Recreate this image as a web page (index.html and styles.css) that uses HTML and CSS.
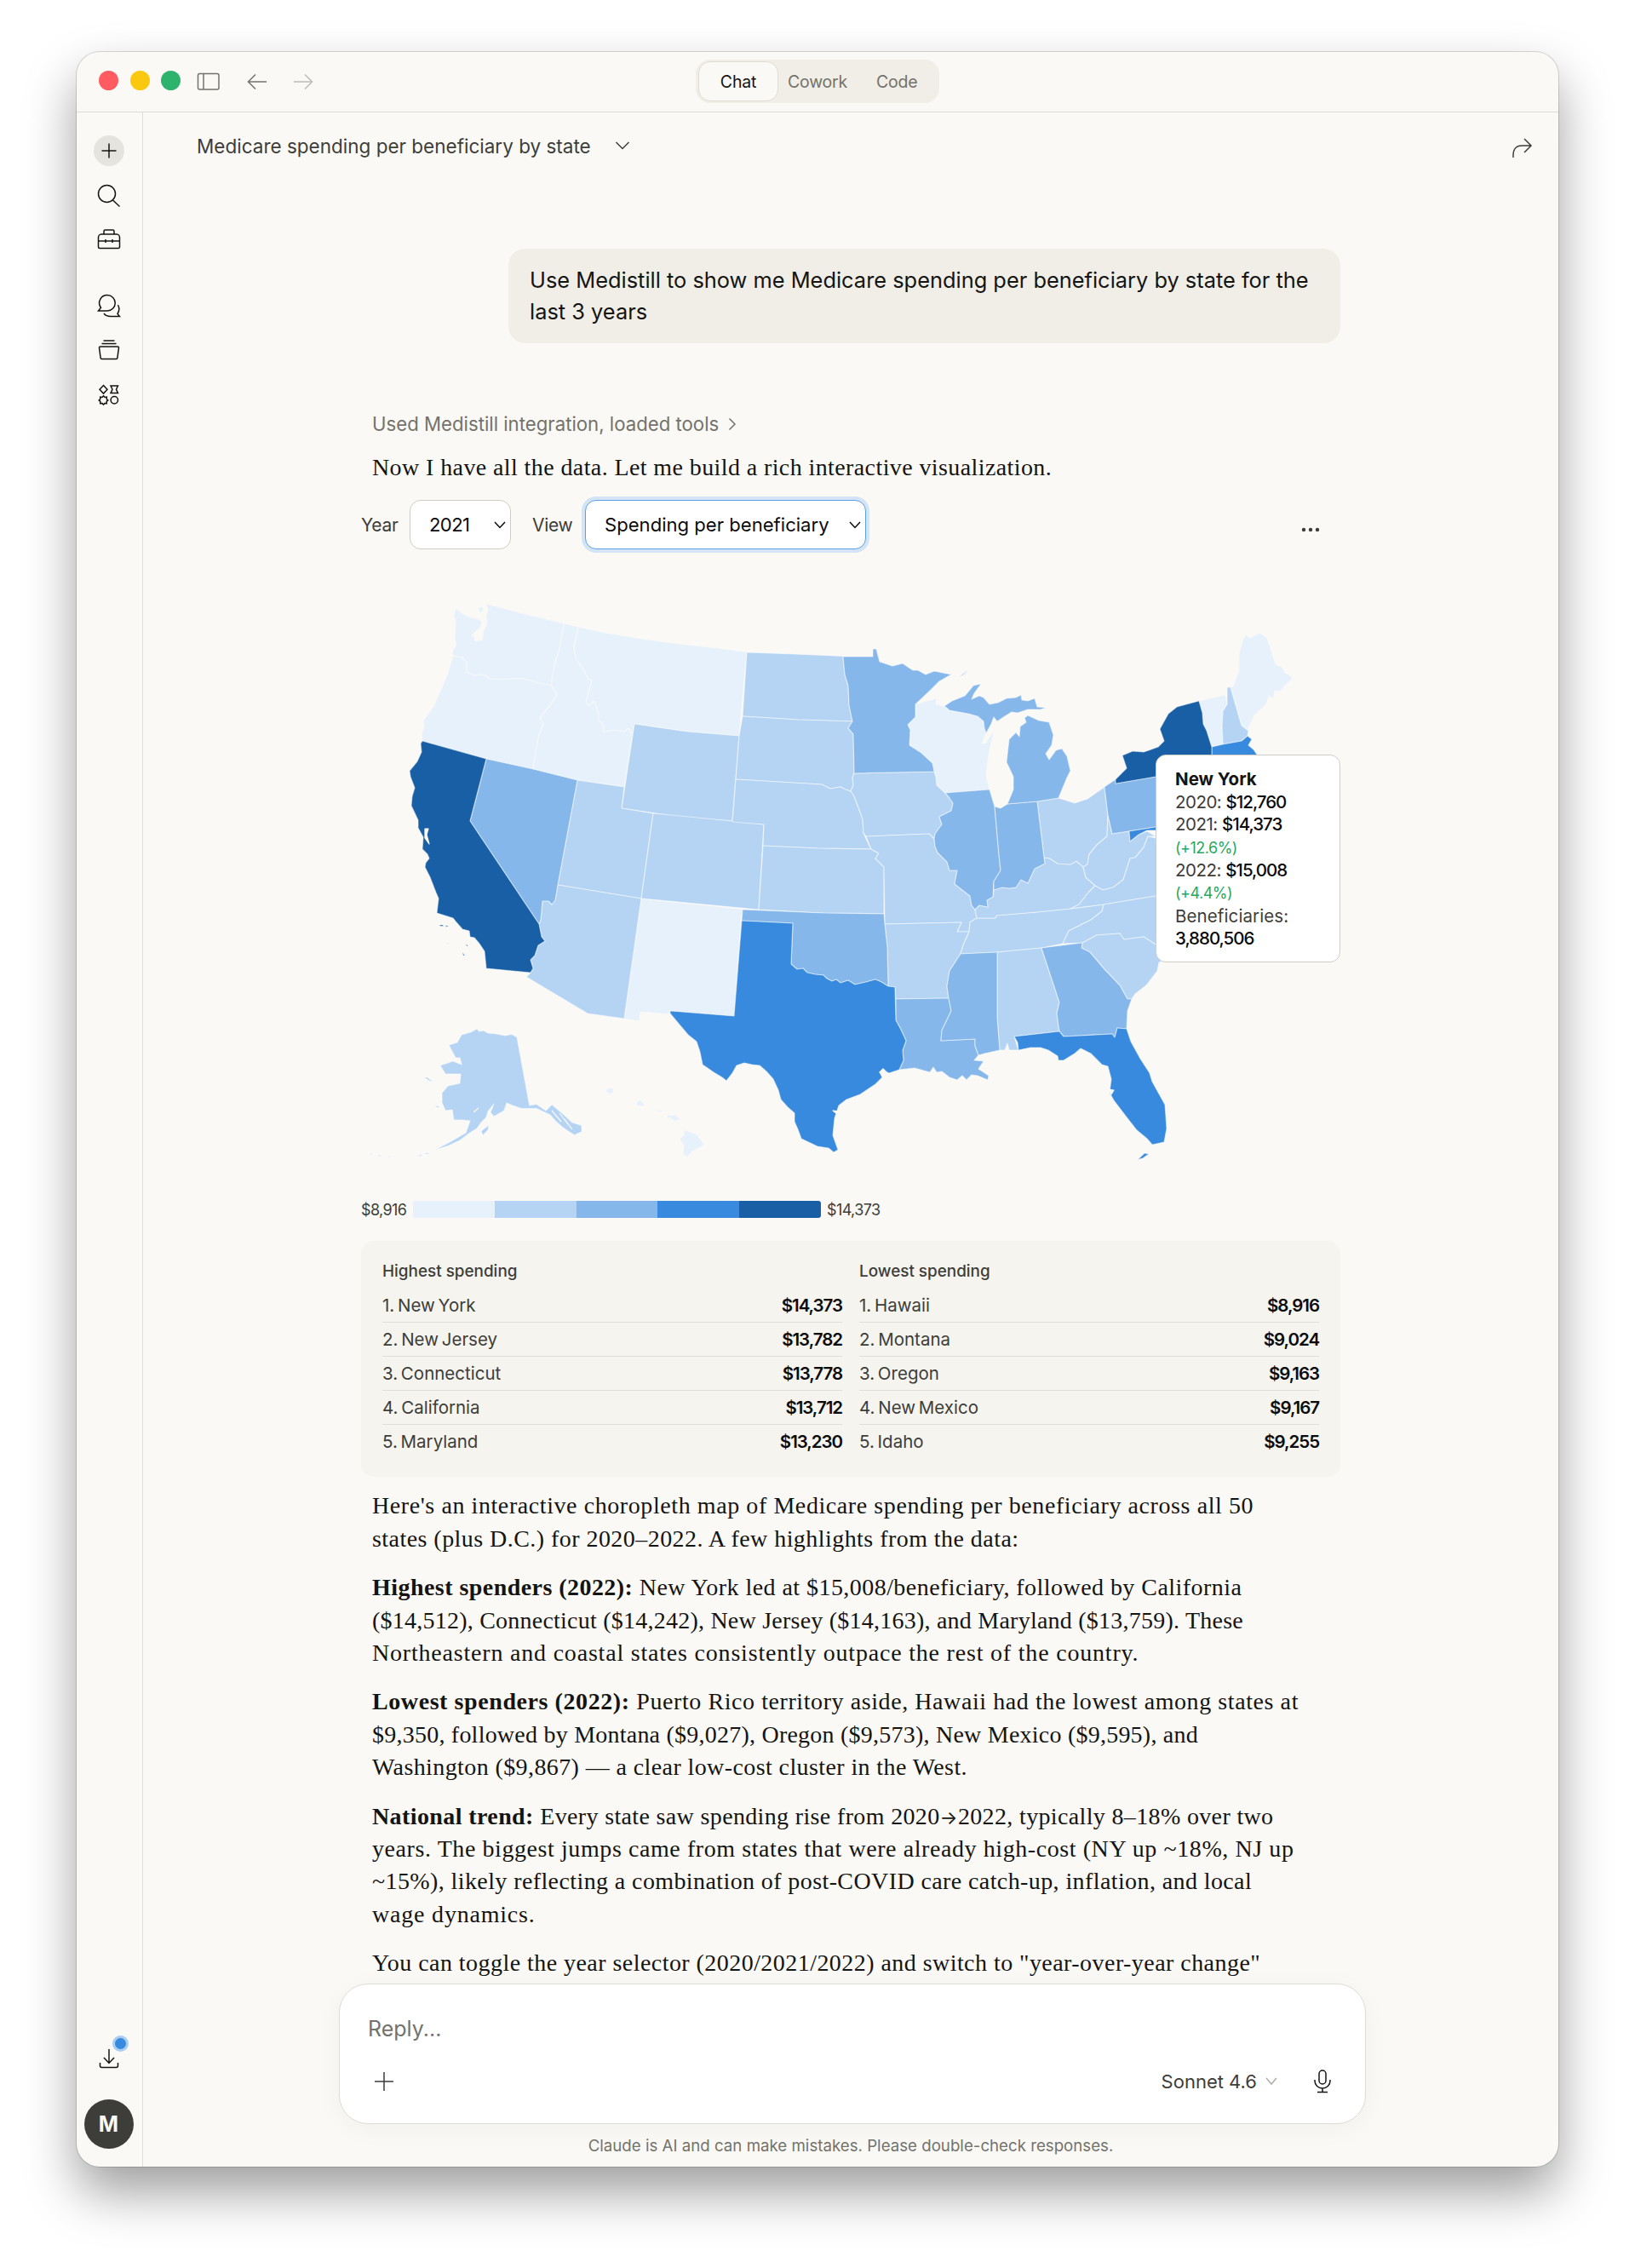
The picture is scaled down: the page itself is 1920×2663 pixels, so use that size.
FILE: index.html
```html
<!DOCTYPE html>
<html lang="en">
<head>
    <meta charset="UTF-8">
    <meta name="viewport" content="width=device-width, initial-scale=1.0">
    <title>Medicare spending per beneficiary by state</title>
    <link rel="stylesheet" href="styles.css">
</head>
<body>
    <div class="window">
        <header class="titlebar">
            <div class="titlebar-left">
                <span class="light light-red"></span>
                <span class="light light-yellow"></span>
                <span class="light light-green"></span>
                <svg class="icon-panel" width="28" height="24" viewBox="0 0 28 24"><rect x="1.5" y="2.5" width="24.5" height="18.5" rx="2"/><path d="M8 2.5v18.5"/></svg>
                <svg class="icon-back" width="24" height="20" viewBox="0 0 24 20"><path d="M23 10H1.5M10 1.5L1.5 10l8.500 8.500"/></svg>
                <svg class="icon-forward" width="24" height="20" viewBox="0 0 24 20"><path d="M1 10h21.500M14 1.500l8.500 8.500-8.500 8.500"/></svg>
            </div>
            <nav class="tabs">
                <span class="tab active">Chat</span>
                <span class="tab tab-cowork">Cowork</span>
                <span class="tab tab-code">Code</span>
            </nav>
        </header>

        <div class="body">
            <aside class="sidebar">
                <div class="sidebar-top">
                    <span class="new-chat"><svg width="20" height="20" viewBox="0 0 20 20"><path d="M10 1.500v17M1.500 10h17"/></svg></span>
                    <svg class="side-icon" width="28" height="28" viewBox="0 0 28 28"><circle cx="11.500" cy="11.500" r="10"/><path d="M18.500 19l8 7.500"/></svg>
                    <svg class="side-icon" width="28" height="28" viewBox="0 0 28 28"><path d="M8 7V3.500a1.500 1.500 0 0 1 1.500-1.500h9A1.500 1.500 0 0 1 20 3.500V7"/><path d="M5 7h18c2 0 3.500 2 3.500 4v11a1.500 1.500 0 0 1-1.500 1.500H3A1.500 1.500 0 0 1 1.500 22V11c0-2 1.500-4 3.500-4zM1.500 15h25M10 13v4M18 13v4"/></svg>
                    <svg class="side-icon side-gap" width="28" height="28" viewBox="0 0 28 28"><path d="M12 1.500a9.250 9.250 0 0 1 0 18.500H1.500l3-3.700A9.250 9.250 0 0 1 12 1.500z"/><path d="M8 23c2 2.800 5 3.500 8 3.500H26.500l-2.500-3c2-3 2.500-7 .5-10.500"/></svg>
                    <svg class="side-icon" width="28" height="28" viewBox="0 0 28 28"><path d="M7.500 3h13M5.500 6.500h17M3.500 10h21a1 1 0 0 1 1 1.200l-1.600 12a1.500 1.500 0 0 1-1.500 1.300H5.600a1.500 1.500 0 0 1-1.500-1.300l-1.600-12a1 1 0 0 1 1-1.200z"/></svg>
                    <svg class="side-icon" width="28" height="28" viewBox="0 0 28 28"><path d="M7.500 3.500l4.500 4.800-4.500 4.800L3 8.300zM16 4h8.500l-2 4.300 2 4.300H16l2-4.300z"/><circle cx="20.300" cy="20.800" r="4.200"/><path d="M7.500 15.800l1.500 1.600 2.300-.3-.1 2.300 1.600 1.500-1.600 1.500.1 2.300-2.300-.2-1.500 1.600-1.500-1.600-2.300.2.1-2.300-1.600-1.500 1.600-1.500-.1-2.300 2.300.3z"/></svg>
                </div>
                <div class="sidebar-bottom">
                    <div class="download">
                        <svg class="side-icon" width="28" height="28" viewBox="0 0 28 28"><path d="M14 3v16M8 13l6 6.500 6-6.500M3.500 19v3.500A2 2 0 0 0 5.500 24.500h17a2 2 0 0 0 2-2V19"/></svg>
                        <span class="dot"></span>
                    </div>
                    <span class="avatar">M</span>
                </div>
            </aside>

            <main class="main">
                <div class="chat-header">
                    <h1 class="chat-title">Medicare spending per beneficiary by state</h1>
                    <svg class="chevron" width="18" height="12" viewBox="0 0 18 12"><path d="M1.500 2L9 9.500 16.500 2"/></svg>
                    <svg class="share" width="25" height="26" viewBox="0 0 25 26"><path d="M2 25v-3c0-6.500 3.500-11 10-11h11M15 3l8 8-8 8"/></svg>
                </div>

                <div class="thread">
                    <div class="bubble">Use Medistill to show me Medicare spending per beneficiary by state for the<br>last 3 years</div>

                    <div class="tool-note">Used Medistill integration, loaded tools
                        <svg width="10" height="16" viewBox="0 0 10 16"><path d="M1.500 1.500L8 8l-6.500 6.500"/></svg>
                    </div>
                    <p class="intro">Now I have all the data. Let me build a rich interactive visualization.</p>

                    <section class="widget">
                        <div class="controls">
                            <label>Year</label>
                            <div class="select select-year"><span>2021</span><svg width="16" height="11" viewBox="0 0 16 11"><path d="M2 2l6 6.500L14 2"/></svg></div>
                            <label class="label-view">View</label>
                            <div class="select select-view"><span>Spending per beneficiary</span><svg width="16" height="11" viewBox="0 0 16 11"><path d="M2 2l6 6.500L14 2"/></svg></div>
                            <svg class="more" width="22" height="6" viewBox="0 0 22 6"><circle cx="3" cy="3" r="2.200"/><circle cx="11" cy="3" r="2.200"/><circle cx="19" cy="3" r="2.200"/></svg>
                        </div>

                        <div class="map-wrap">
                            <svg class="map" width="1150" height="700" viewBox="424 690 1150 700">
                                <!-- lowest band -->
                                <g class="q1">
                                    <path id="WA" d="M535 714L544 721 553 725 562 727 566 731 564 737 558 742 554 746 557 747.500 558 752.500 566 752 568 740 572 733 571 723 573 715 570 708.700Q615 721 662 732L657 762 652 778 648 797V805L633 802 615 797H602L590 798 575 797 570 793 563 792 557 793 548 789V777L542 772 532 770 531 765 536 757 534 750 535 730 533 722zM561 714l5-2 2 4-4 4z"/>
                                    <path id="OR" d="M532 770L542 772 548 777V789L557 793 563 792 570 793 575 797 590 798 602 797H615L633 802 648 805 654 816 647 827 634 843 638 850 633 863 629 883 626 903Q598 897 571 891L496 870 495 862 498 853 497 846 509 830 520 805 526 790z"/>
                                    <path id="ID" d="M662 732L679 736 677 747 674 760 677 775 685 786 691 797 695 799 691 814 688 824 691 828 698 823 703 837V846L708 850 709 859 722 857 733 859 738 855 743 862 733 924 678 916 626 903 629 883 633 863 638 850 634 843 647 827 654 816 648 805V797L652 778 657 762z"/>
                                    <path id="MT" d="M679 736L710 743 753 750 797 756 843 761 877 765.500 868 864 807 859 745 850 743 862 738 855 733 859 722 857 709 859 708 850 703 846V837L698 823 691 828 688 824 691 814 695 799 691 797 685 786 677 775 674 760 677 747z"/>
                                    <path id="NM" d="M753 1055L872 1067.500 870 1081 862 1193 787 1187 785 1191 752 1188 751 1199 733 1196z"/>
                                    <path id="WI" d="M1075 827L1088 823 1100 820 1099 827 1109 829 1115 834 1137 838 1148 841 1155 847 1156 855 1158 861 1153 873H1157L1168 857 1162 880 1160 894 1158 910 1162 927 1110 931 1100 922 1099 912 1097 906 1095 896 1082 884 1068 875 1069 857 1066 851 1075 842z"/>
                                    <path id="VT" d="M1408 823L1439 816 1441 827 1436 835 1435 853 1436 874 1423 877 1417 858 1413 850 1412 837z"/>
                                    <path id="ME" d="M1445 807L1448 806 1455 787V767L1459 752 1463 745 1468 749 1479 743 1488 749 1498 780 1505 783 1510 791H1513L1518 797 1510 804 1503 812 1497 811 1495 820 1490 817 1487 827 1473 840 1467 853 1466 858 1458 852z"/>
                                    <path id="HI" d="M711 1281L715 1277.500 721 1277.700 720 1283 716 1285zM699 1287L702 1283 700 1286zM747 1295L752 1291 758 1299 748 1298zM769 1303L781 1304 775 1306zM775 1310L779 1311 778 1313.500zM783 1308L788 1310 793 1309 799 1314 792 1317 788 1313 784 1312.700zM803 1326L818 1332 827 1344 813 1352 807 1359 802 1355 803 1345 798 1338 803 1332z"/>
                                </g>
                                <!-- second band -->
                                <g class="q2">
                                    <path id="WY" d="M745 850L807 859 868 864 860 964 797 959 730 949z"/>
                                    <path id="UT" d="M678 916L733 924 730 949 767 955 753 1055 655 1039z"/>
                                    <path id="CO" d="M767 955L860 964 897 968 891 1068 753 1055z"/>
                                    <path id="AZ" d="M655 1039L753 1055 733 1196 690 1190 618 1147 623 1142 626 1137 623 1127 628 1122 632 1110 640 1105 636 1100 633 1085 635 1080 637 1058H644L648 1062 652 1057z"/>
                                    <path id="ND" d="M877 766L933 768 990 770.500 992 792 996 805 997 828 1001 847 937 845 872 841z"/>
                                    <path id="SD" d="M872 841L937 845 1001 847 996 855 1002 862 1003 908 1001 913 1002 922 999 929 993 927 987 924 975 926 965 921 864 915 868 864z"/>
                                    <path id="NE" d="M864 915L965 921 975 926 987 924 993 927 999 929 1003 935 1008 948 1013 962 1014 978 1018 987 1023 997 960 996 896 993 897 968 860 965z"/>
                                    <path id="KS" d="M896 993L960 996 1023 997 1032 1002 1028 1008 1038 1018V1073L967 1072 891 1068z"/>
                                    <path id="IA" d="M1003 908L1097 906 1099 912 1100 922 1110 931 1115 937 1119 943 1117 952 1103 959 1106 968 1098 979 1097 985 1091 979 1017 982 1014 978 1013 962 1008 948 1003 935 999 929 1002 922 1001 913z"/>
                                    <path id="MO" d="M1017 982L1091 979 1097 985 1098 994 1101 1001 1112 1012 1115 1022H1124L1121 1038 1139 1052 1141 1063 1145 1068 1147 1078 1139 1083 1138 1094H1124L1129 1083 1039 1085 1038 1018 1028 1008 1032 1002 1023 997z"/>
                                    <path id="AR" d="M1039 1085L1129 1083 1124 1094H1138L1131 1110 1128 1120 1115 1140 1112 1158 1114 1172 1052 1173 1051 1159 1043 1158 1042 1112z"/>
                                    <path id="TN" d="M1138 1094L1139 1083 1147 1078 1169 1078 1170 1075 1217 1071 1257 1067 1296 1062 1294 1070 1281 1080 1255 1093 1248 1108 1223 1113 1171 1118 1128 1120 1131 1110z"/>
                                    <path id="KY" d="M1145 1068L1150 1063 1160 1065 1159 1057 1166 1053 1167 1045 1177 1042 1185 1043 1193 1042 1199 1033 1207 1037 1215 1020 1227 1014 1226 1007 1233 1008 1242 1014 1257 1015 1264 1011 1272 1018 1275 1030 1286 1040 1278 1048 1267 1062 1257 1067 1217 1071 1170 1075 1169 1078 1147 1078z"/>
                                    <path id="OH" d="M1218 941L1243 937 1262 943 1277 938 1297 924 1301 957 1300 982 1288 992 1279 1003 1277 1015 1272 1018 1264 1011 1257 1015 1242 1014 1233 1008 1226 1007z"/>
                                    <path id="WV" d="M1301 957L1306 979 1326 976 1327 988 1337 980 1347 976 1357 982 1348 982 1343 995 1333 1007 1327 1008 1319 1033 1307 1042 1295 1045 1286 1040 1275 1030 1272 1018 1277 1015 1279 1003 1288 992 1300 982z"/>
                                    <path id="VA" d="M1257 1067L1267 1062 1278 1048 1286 1040 1295 1045 1307 1042 1319 1033 1327 1008 1333 1007 1343 995 1348 982 1357 984 1400 1000 1420 1040 1357 1052 1296 1062z"/>
                                    <path id="NC" d="M1296 1062L1357 1052 1420 1042 1430 1080 1382 1122 1357 1109 1343 1100 1320 1103 1315 1096 1288 1098 1271 1107 1248 1108 1255 1093 1281 1080 1294 1070z"/>
                                    <path id="SC" d="M1271 1107L1288 1098 1315 1096 1320 1103 1343 1100 1357 1109 1380 1122 1361 1130 1359 1140 1346 1157 1333 1167 1329 1173H1324L1315 1157 1296 1137 1280 1118 1270 1113z"/>
                                    <path id="AL" d="M1171 1118L1223 1113 1244 1177 1241 1190 1244 1211 1191 1217 1196 1233H1185L1183 1225 1180 1233H1174L1171 1195z"/>
                                    <path id="NH" d="M1441 807H1445L1458 852 1466 858 1465 864 1458 870 1436 874 1435 853 1436 835 1441 827z"/>
                                    <path id="DE" d="M1385 960L1400 985 1390 990z"/>
                                    <path id="AK" d="M560 1208L563 1211 568 1210 573 1213 583 1214 593 1216 601 1214.500 607 1217.700 621.700 1298 630 1296.500 641 1304 648 1297 660 1307 672 1318 683 1321.500V1329L678 1331 675 1333 667 1328 660 1323 652 1316 646 1309 630 1301.500 612 1301.500 602 1298 595 1295 592 1304 580 1311 576 1306 580 1296 573 1305 571 1312 565 1318 560 1325 552 1330 540 1339 527 1345 518 1348 511 1350 530 1340 547 1330 552 1316 543 1315 533 1315 531 1303 523 1304 519 1295V1283L526 1275 540 1272 541 1261H523L517 1251 532 1246 542 1250 540 1242H535L527 1227 537 1224 542 1215 553 1212z"/>
                                    <path d="M565 1328L574 1321 573 1327 567 1333zM498 1265L502 1265 508.500 1270.500 504 1269zM510 1298L516 1299 514 1301zM489 1358l6-2.500 1 1.500zM498 1355l5-2 0 2zM456 1357l4 1.500-3 0zM443 1356l5 1-3 1zM434 1354l3 1-2 1z"/>
                                </g>
                                <!-- third band -->
                                <g class="q3">
                                    <path id="NV" d="M571 891L626 903 678 916 655 1039 652 1057 648 1062 644 1058H637L635 1080 633 1085 552 964z"/>
                                    <path id="OK" d="M872 1068L967 1072 1038 1073 1039 1085 1042 1112 1043 1158 1035 1153 1028 1150 1017 1153 1004 1156 996 1151 987 1154 982 1150 977 1152 971 1149 967 1145 957 1144 948 1142 943 1137 936 1138 929 1132 931 1084 871 1081z"/>
                                    <path id="MN" d="M990 771H1025V762H1029L1033 777 1048 782 1060 779 1072 787H1078L1087 792 1097 788 1117 792 1103 800 1093 810 1075 827V842L1066 851 1069 857 1068 875 1082 884 1095 896 1097 906 1003 908 1002 862 996 855 1001 847 997 828 996 805 992 792z"/>
                                    <path id="IL" d="M1110 931L1162 927 1168 947 1173 1003 1175 1022 1167 1035 1166 1053 1159 1057 1160 1065 1150 1063 1145 1068 1141 1063 1139 1052 1121 1038 1124 1022H1115L1112 1012 1101 1001 1098 994 1097 985 1098 979 1106 968 1103 959 1117 952 1119 943 1115 937z"/>
                                    <path id="IN" d="M1168 947L1175 949 1183 944 1218 941 1226 1007 1227 1014 1215 1020 1207 1037 1199 1033 1193 1042 1185 1043 1177 1042 1167 1045V1035L1175 1022 1173 1003z"/>
                                    <path id="MI" d="M1109 829L1118 823 1133 817 1143 805 1152 803 1144 814 1141 821 1150 817 1155 819 1162 827 1172 825 1182 820 1193 819 1199 816 1200 822 1207 823 1215 820 1218 830 1228 831 1222 833 1207 833 1195 837 1188 836 1180 841 1171 847 1167 842 1164 850 1158 861 1156 855 1155 847 1148 841 1137 838 1115 834zM1207 840L1220 846 1232 848 1237 863 1235 875 1228 885 1232 892 1240 881 1247 879 1253 888 1257 905 1253 913 1248 925 1243 937 1218 941 1183 944 1190 927V912L1182 895 1185 868 1193 860 1197 865 1198 853 1205 848 1203 843zM1126 795L1137 786.500 1132 792z"/>
                                    <path id="LA" d="M1052 1173L1114 1172 1117 1187 1106 1210 1105 1222 1145 1220V1228L1149 1239 1144 1245 1155 1246 1149 1255 1161 1263 1160 1268 1148 1263 1141 1262 1135 1268 1130 1263 1124 1268 1115 1265 1106 1258 1100 1259 1096 1253 1092 1259 1074 1254 1056 1256 1061 1245 1060 1233 1064 1222 1057 1207 1052 1198z"/>
                                    <path id="MS" d="M1128 1120L1171 1118V1195L1174 1233 1156 1237 1149 1239 1145 1228V1220L1105 1222 1106 1210 1117 1187 1114 1172 1112 1158 1115 1140z"/>
                                    <path id="GA" d="M1223 1113L1271 1107 1270 1113 1280 1118 1296 1137 1315 1157 1324 1173H1329L1324 1187 1323 1208 1312 1207 1309 1218 1306 1214 1249 1217 1244 1211 1241 1190 1244 1177z"/>
                                    <path id="PA" d="M1297 924L1310 915V920L1357 912 1400 905V965L1357 971 1306 979 1301 957z"/>
                                </g>
                                <!-- fourth band -->
                                <g class="q4">
                                    <path id="TX" d="M871 1081L931 1084 929 1132 936 1138 943 1137 948 1142 957 1144 967 1145 971 1149 977 1152 982 1150 987 1154 996 1151 1004 1156 1017 1153 1028 1150 1035 1153 1043 1158 1051 1159 1052 1198 1057 1207 1064 1222 1060 1233 1061 1245 1056 1256 1044 1260 1038 1257 1033 1259 1036 1265 1028 1273 1010 1285 994 1291 985 1298 980 1313 978 1333 984 1350 979 1353 973 1348 960 1346 941 1337 937 1326 933 1317V1307L925 1300 917 1291 914 1280 908 1267 900 1258 892 1251 883 1250 874 1248 865 1251 860 1260 853 1269 848 1265 838 1259 825 1250 822 1235 818 1223 808 1215 797 1202 787 1190V1187L862 1193z"/>
                                    <path id="FL" d="M1191 1217L1244 1211 1249 1217 1306 1214 1309 1218 1312 1207 1323 1208 1328 1223 1339 1243 1350 1260 1353 1270 1368 1297 1370 1325 1367 1341 1353 1344 1347 1337 1335 1327 1324 1313 1308 1292 1303 1283 1305 1267 1301 1252 1294 1250 1281 1237 1269 1231 1262 1237 1249 1245H1243L1242 1240 1231 1233 1222 1230H1210L1196 1233 1195 1224zM1336 1361.500L1344 1354 1349 1355 1342 1360z"/>
                                    <path id="MD" d="M1326 976L1357 971 1390 965V985L1357 975H1347L1337 980 1327 988z"/>
                                    <path id="MA" d="M1423 877L1436 874 1458 870 1465 864 1470 868 1466 875 1472 880 1476 886 1490 900H1423z"/>
                                </g>
                                <!-- top band -->
                                <g class="q5">
                                    <path id="CA" d="M496 870L571 891 552 964 633 1085 636 1100 640 1105 632 1110 628 1122 623 1127 626 1137 623 1142 571 1137 569 1117 563 1108 557 1101 552 1100 551 1093 543 1091 536 1083 532 1078 513 1072 515 1055 512 1048 505 1030 499 1018 500 1013 504 1008 502 1003 496 997 497 983 491 972V963L483 946 484 935 487 925 482 912 481 905 490 894 495 883 494 873z"/>
                                    <path d="M516 1086h4l1 1.500h-4zM523 1086.500l4 1-3 1zM547 1108l3 3-2 0zM543 1118l3 4h-2zM525 1107l2 1-1 0z"/>
                                    <path id="NY" d="M1310 915L1323 902 1318 887 1330 882 1343 883 1349 881 1360 877 1367 870 1362 856 1372 838 1382 830 1408 823 1412 837 1413 850 1417 858 1423 877V895L1400 905 1357 912 1310 920z"/>
                                </g>
                                <path class="water" d="M499 973h4l-2 7 3 11-5-7zM1033 1259l4-4 3 3-3 4zM978 1304l8 1-3 3zM562 1301l-6 5M657 1307l10 13M648 1304l11 13M663 1314l9 12M1302 1279l6 1-3 5z"/>
                            </svg>

                            <div class="tooltip">
                                <b>New York</b><br>
                                2020: <em>$12,760</em><br>
                                2021: <em>$14,373</em><br>
                                <span class="up">(+12.6%)</span><br>
                                2022: <em>$15,008</em><br>
                                <span class="up">(+4.4%)</span><br>
                                <span class="wide">Beneficiaries:</span><br>
                                <em>3,880,506</em>
                            </div>
                        </div>

                        <div class="legend">
                            <span>$8,916</span>
                            <div class="legend-bar"><i class="b1"></i><i class="b2"></i><i class="b3"></i><i class="b4"></i><i class="b5"></i></div>
                            <span>$14,373</span>
                        </div>

                        <div class="ranks">
                            <div class="rank">
                                <h2>Highest spending</h2>
                                <div class="row"><span>1. New York</span><strong>$14,373</strong></div>
                                <div class="row"><span>2. New Jersey</span><strong>$13,782</strong></div>
                                <div class="row"><span>3. Connecticut</span><strong>$13,778</strong></div>
                                <div class="row"><span>4. California</span><strong>$13,712</strong></div>
                                <div class="row"><span>5. Maryland</span><strong>$13,230</strong></div>
                            </div>
                            <div class="rank">
                                <h2>Lowest spending</h2>
                                <div class="row"><span>1. Hawaii</span><strong>$8,916</strong></div>
                                <div class="row"><span>2. Montana</span><strong>$9,024</strong></div>
                                <div class="row"><span>3. Oregon</span><strong>$9,163</strong></div>
                                <div class="row"><span>4. New Mexico</span><strong>$9,167</strong></div>
                                <div class="row"><span>5. Idaho</span><strong>$9,255</strong></div>
                            </div>
                        </div>
                    </section>

                    <article class="answer">
                        <p><span class="base">Here's an interactive choropleth map of Medicare spending per beneficiary across all 50</span><br>states (plus D.C.) for 2020–2022. A few highlights from the data:</p>
                        <p><b>Highest spenders (2022):</b> New York led at $15,008/beneficiary, followed by California<br><span class="snug">($14,512), Connecticut ($14,242), New Jersey ($14,163), and Maryland ($13,759). These</span><br><span class="wide">Northeastern and coastal states consistently outpace the rest of the country.</span></p>
                        <p class="base"><b>Lowest spenders (2022):</b> Puerto Rico territory aside, Hawaii had the lowest among states at<br><span class="snug">$9,350, followed by Montana ($9,027), Oregon ($9,573), New Mexico ($9,595), and</span><br><span class="regular">Washington ($9,867) — a clear low-cost cluster in the West.</span></p>
                        <p class="regular"><b>National trend:</b> <span class="loose">Every state saw spending rise from 2020<span class="arrow">→</span>2022, typically 8–18% over two</span><br><span class="base">years. The biggest jumps came from states that were already high-cost (NY up ~18%, NJ up</span><br>~15%), likely reflecting a combination of post-COVID care catch-up, inflation, and local<br><span class="wide">wage dynamics.</span></p>
                        <p>You can toggle the year selector (2020/2021/2022) and switch to "year-over-year change"</p>
                    </article>
                </div>

                <div class="composer">
                    <div class="placeholder">Reply...</div>
                    <div class="composer-row">
                        <svg class="plus" width="24" height="24" viewBox="0 0 24 24"><path d="M12 1v22M1 12h22"/></svg>
                        <span class="model">Sonnet 4.6</span>
                        <svg class="model-chevron" width="14" height="10" viewBox="0 0 14 10"><path d="M1 1l6 7 6-7"/></svg>
                        <svg class="mic" width="22" height="30" viewBox="0 0 22 30"><rect x="7" y="2" width="8" height="16" rx="4"/><path d="M2 13v1.500a9 8.500 0 0 0 18 0V13M11 23v4.500M5 27.500h12"/></svg>
                    </div>
                </div>
                <p class="disclaimer">Claude is AI and can make mistakes. Please double-check responses.</p>
            </main>
        </div>
    </div>
</body>
</html>
```

FILE: styles.css
```css
* {
    box-sizing: border-box;
}
body {
    margin: 0;
    padding: 61px 90px 0;
    height: 2663px;
    overflow: hidden;
    background: #ffffff;
    font-family: Inter, "Liberation Sans", sans-serif;
    color: #141413;
}
svg {
    fill: none;
    stroke: currentColor;
    stroke-width: 1.5;
    flex: none;
}
p, h1, h2 {
    margin: 0;
    font-weight: 400;
}
.window {
    display: flex;
    flex-direction: column;
    height: 2483px;
    background: #faf9f5;
    border-radius: 27px;
    overflow: hidden;
    box-shadow: 0 0 0 1px rgba(0, 0, 0, 0.14), 0 30px 60px rgba(0, 0, 0, 0.38);
}

/* title bar */
.titlebar {
    display: flex;
    height: 71px;
    border-bottom: 1.5px solid #dcdbd6;
}
.titlebar-left {
    display: flex;
    align-items: center;
    width: 727px;
    height: 67px;
    padding-left: 26px;
    color: #73726c;
}
.light {
    width: 23px;
    height: 23px;
    margin-right: 13.5px;
    border-radius: 50%;
}
.light-red { background: #ff5b60; }
.light-yellow { background: #fac80f; }
.light-green { background: #2db36b; }
.icon-panel { margin: 3px 0 0 5px; }
.icon-back { margin: 3px 0 0 31px; }
.icon-forward { margin: 3px 0 0 30px; opacity: 0.45; }
.tabs {
    display: flex;
    align-items: center;
    width: 286px;
    height: 51px;
    margin-top: 9px;
    padding-left: 3px;
    background: #f0eee6;
    border-radius: 17px;
    font-size: 19.500px;
    letter-spacing: -0.2px;
    color: #73726c;
}
.tab.active {
    width: 94px;
    height: 47px;
    line-height: 46px;
    text-align: center;
    color: #141413;
    background: #faf9f5;
    border: 1px solid #dedcd3;
    border-radius: 14px;
}
.tab-cowork { width: 70px; margin-left: 11px; }
.tab-code { margin-left: 34px; }

.body {
    display: flex;
    flex: 1;
}

/* sidebar */
.sidebar {
    display: flex;
    flex-direction: column;
    justify-content: space-between;
    width: 78px;
    padding: 27px 2px 21px 0;
    border-right: 1px solid #dfded9;
}
.sidebar-top,
.sidebar-bottom {
    display: flex;
    flex-direction: column;
    align-items: center;
}
.sidebar-top { gap: 24px; }
.new-chat {
    display: flex;
    align-items: center;
    justify-content: center;
    width: 36px;
    height: 36px;
    margin-bottom: -3px;
    border-radius: 50%;
    background: #e5e4df;
}
.side-gap { margin-top: 25px; }
.download {
    position: relative;
    display: flex;
    margin-bottom: 34px;
}
.dot {
    position: absolute;
    left: 18px;
    top: -13px;
    width: 19px;
    height: 19px;
    border: 3px solid #a9cdf3;
    border-radius: 50%;
    background: #378add;
}
.avatar {
    width: 58px;
    height: 58px;
    line-height: 58px;
    border-radius: 50%;
    background: #3d3d3a;
    color: #faf9f5;
    font-size: 25px;
    font-weight: 700;
    text-align: center;
}

/* conversation */
.main {
    flex: 1;
}
.chat-header {
    display: flex;
    align-items: center;
    height: 78px;
    padding: 0 30px 0 63px;
    color: #3d3d3a;
}
.chat-title {
    width: 463px;
    font-size: 22.5px;
    white-space: nowrap;
}
.chevron { margin-left: 28px; }
.share { margin: 3px 0 0 auto; }
.thread {
    display: flex;
    flex-direction: column;
    width: 1150px;
    margin: 82px 0 0 256px;
}
.bubble {
    align-self: flex-end;
    width: 977px;
    height: 111px;
    padding: 19px 25px;
    background: #f0eee6;
    border-radius: 20px;
    font-size: 25.400px;
    line-height: 36.5px;
    white-space: nowrap;
}
.tool-note {
    margin: 76px 0 0 13px;
    font-size: 22.200px;
    line-height: 38px;
    color: #73726c;
}
.tool-note svg { margin-left: 5px; }
.intro {
    margin: 13px 0 19px 13px;
}
.intro,
.answer {
    font-family: "Liberation Serif", serif;
    font-size: 28px;
    line-height: 38.4px;
    letter-spacing: 0.45px;
    white-space: nowrap;
}
.intro { letter-spacing: 0.4px; }

/* map widget */
.controls {
    display: flex;
    align-items: center;
    height: 58px;
    font-size: 22.100px;
    color: #3d3d3a;
}
.controls label {
    width: 57px;
    font-size: 21px;
    letter-spacing: -0.3px;
}
.controls .label-view { margin-left: 25px; width: 62px; }
.select {
    display: flex;
    align-items: center;
    justify-content: space-between;
    height: 58px;
    padding: 0 4px 0 22px;
    background: #ffffff;
    border: 1px solid #cfcdc4;
    border-radius: 13px;
    color: #0b0b0b;
}
.select-year { width: 119px; }
.select-year span { letter-spacing: -0.6px; }
.select-view {
    width: 330px;
    border: 1.500px solid #5b9fe6;
    box-shadow: 0 0 0 4px #d3e4f7;
}
.more {
    margin: 11px 24px 0 auto;
    fill: #3d3d3a;
    stroke: none;
}
.map-wrap {
    position: relative;
    height: 700px;
    margin-top: 45px;
}
.map {
    display: block;
    stroke: rgba(255, 255, 255, 0.5);
    stroke-width: 1.200;
    stroke-linejoin: round;
}
.q1 { fill: #e6f1fb; stroke: rgba(251, 250, 247, 0.7); }
.q2 { fill: #b5d4f4; }
.q3 { fill: #85b7eb; }
.q4 { fill: #378add; }
.q5 { fill: #185fa5; }
.water { fill: #faf9f5; stroke: #faf9f5; }
.tooltip {
    position: absolute;
    right: 0;
    top: 196px;
    width: 217px;
    height: 244px;
    padding: 15px 22px;
    background: #ffffff;
    border: 1px solid #cfcdc4;
    border-radius: 12px;
    font-size: 20.500px;
    line-height: 26.400px;
    letter-spacing: -0.5px;
    color: #3d3d3a;
    white-space: nowrap;
}
.tooltip b {
    font-weight: 700;
    letter-spacing: 0;
    color: #141413;
}
.tooltip .wide { letter-spacing: 0.1px; }
.tooltip em {
    font-style: normal;
    font-weight: 500;
    letter-spacing: -1px;
    color: #0b0b0b;
}
.tooltip .up {
    font-size: 18px;
    color: #27a862;
}
.legend {
    display: flex;
    align-items: center;
    gap: 7px;
    height: 30px;
    margin: 15px 0 22px;
    font-size: 18px;
    letter-spacing: -0.6px;
    color: #3d3d3a;
}
.legend span:first-child { width: 54px; }
.legend-bar {
    display: flex;
    width: 479px;
    height: 20px;
    border-radius: 3px;
    overflow: hidden;
}
.legend-bar i { flex: 1; }
.b1 { background: #e6f1fb; }
.b2 { background: #b5d4f4; }
.b3 { background: #85b7eb; }
.b4 { background: #378add; }
.b5 { background: #185fa5; }
.ranks {
    display: flex;
    gap: 20px;
    height: 277px;
    padding: 20px 25px;
    background: #f5f4ef;
    border-radius: 15px;
    color: #3d3d3a;
}
.rank { flex: 1; }
.rank h2 {
    height: 36px;
    font-size: 18.900px;
    font-weight: 500;
    line-height: 31px;
}
.row {
    display: flex;
    justify-content: space-between;
    height: 39.800px;
    line-height: 40px;
    font-size: 20.500px;
    border-bottom: 1.500px solid #dfded8;
}
.row:last-child { border-bottom: none; }
.row span { word-spacing: -2px; }
.row strong {
    font-weight: 600;
    letter-spacing: -1.050px;
    margin-right: -1px;
    padding-right: 1px;
    color: #0b0b0b;
}
.answer {
    margin: 15px 0 0 13px;
}
.answer p { margin-bottom: 19px; }
.answer p:last-child { margin-bottom: 0; }
.snug { letter-spacing: 0.23px; }
.regular { letter-spacing: 0.4px; }
.loose { letter-spacing: 0.35px; }
.base { letter-spacing: 0.58px; }
.wide { letter-spacing: 0.8px; }
.arrow {
    font-family: Inter, sans-serif;
    font-size: 22px;
    line-height: 1;
}

/* composer */
.composer {
    width: 1206px;
    height: 165px;
    margin: 4px 0 0 230px;
    padding: 32px 33px 0;
    background: #ffffff;
    border: 1px solid #dedcd3;
    border-radius: 34px;
    box-shadow: 0 6px 30px rgba(0, 0, 0, 0.04);
}
.placeholder {
    height: 40px;
    line-height: 40px;
    font-size: 25px;
    color: #73726c;
}
.composer-row {
    display: flex;
    align-items: center;
    height: 40px;
    margin-top: 22px;
    padding: 0 6px 0 7px;
    color: #3d3d3a;
}
.model {
    margin-left: auto;
    font-size: 22px;
}
.model-chevron {
    margin-left: 10px;
    stroke: #b0aea5;
}
.mic {
    margin-left: 42px;
    color: #141413;
}
.disclaimer {
    margin-top: 9px;
    line-height: 34px;
    font-size: 18.700px;
    text-align: center;
    color: #73726c;
}
```
